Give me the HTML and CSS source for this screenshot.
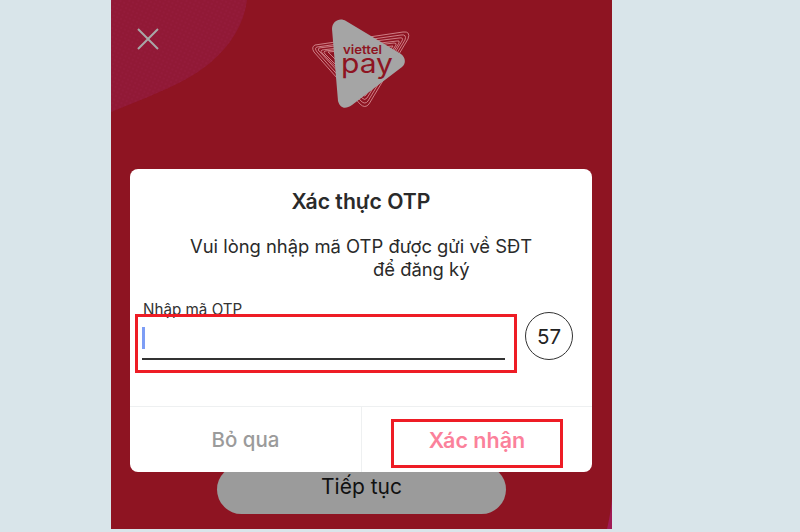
FILE: index.html
```html
<!DOCTYPE html>
<html lang="vi">
<head>
<meta charset="utf-8">
<title>Xác thực OTP</title>
<link rel="stylesheet" href="styles.css">
</head>
<body>
<main class="phone">
  <svg class="blob" viewBox="0 0 501 529" aria-hidden="true">
    <defs>
      <pattern id="dots" width="4" height="4" patternUnits="userSpaceOnUse" patternTransform="rotate(25)">
        <circle cx="1" cy="1" r="1" fill="#961b3c"/>
      </pattern>
    </defs>
    <path class="blob-main" d="M0 0H136C133 24 120 45 99 63C78 80 55 90 0 112Z"/>
    <path fill="url(#dots)" d="M0 0H136C133 24 120 45 99 63C78 80 55 90 0 112Z"/>
    <path class="blob-corner" d="M501 529H496C499 516 500 508 501 498Z"/>
  </svg>
  <header class="top">
    <svg class="close" viewBox="0 0 20 20" aria-label="Đóng"><path d="M0 0L20 20M20 0L0 20"/></svg>
    <svg class="logo" viewBox="0 0 100 100" aria-label="viettel pay">
      <g class="rings">
        <path d="M5 28Q1 30 4 35L50 87Q55 92 59 87L98 22Q101 14 93 15Z"/>
        <path d="M7 30Q4 31 7 35L51 84Q55 88 58 84L95 23Q97 17 91 18Z"/>
        <path d="M9 31Q7 33 10 35L52 81Q55 84 57 81L92 24Q94 20 89 21Z"/>
        <path d="M12 33Q10 34 12 36L53 78Q55 80 56 78L89 26Q90 23 87 24Z"/>
        <path d="M15 34Q13 35 15 37L53 75Q55 76 56 74L86 28Q87 26 84 26Z"/>
        <path d="M18 35L54 71L83 29Z"/>
      </g>
      <path class="play" d="M22 12C22 4 30 0 36 4L91 37C96 41 96 47 92 50L42 88C35 93 30 91 28 84Z"/>
      <text class="logo-small" x="33" y="37" textLength="39" lengthAdjust="spacingAndGlyphs">viettel</text>
      <text class="logo-big" x="31" y="56" textLength="52" lengthAdjust="spacingAndGlyphs">pay</text>
    </svg>
  </header>
  <div class="behind">
    <button class="continue" type="button">Tiếp tục</button>
  </div>
  <section class="dialog">
    <h1 class="title">Xác thực OTP</h1>
    <p class="message">Vui lòng nhập mã OTP được gửi về SĐT<br><span class="indent">để đăng ký</span></p>
    <div class="otp">
      <label class="otp-label">Nhập mã OTP</label>
      <div class="otp-row">
        <div class="otp-box">
          <div class="otp-field"><span class="caret"></span></div>
        </div>
        <div class="timer">57</div>
      </div>
    </div>
    <footer class="actions">
      <div class="action skip">Bỏ qua</div>
      <div class="action confirm"><span class="confirm-box">Xác nhận</span></div>
    </footer>
  </section>
</main>
</body>
</html>
```
FILE: styles.css
```css
* { box-sizing: border-box; }
html, body { margin: 0; height: 532px; overflow: hidden; }
body {
  background: #d9e5ea;
  font-family: Inter, "Liberation Sans", sans-serif;
  padding-left: 111px;
}
.phone {
  position: relative;
  width: 501px;
  height: 529px;
  background: #8e1422;
  overflow: hidden;
}
.blob { position: absolute; inset: 0; width: 501px; height: 529px; }
.blob-main { fill: #911936; }
.blob-corner { fill: #a01a55; }
.top { position: relative; height: 169px; }
.close {
  position: absolute;
  left: 27px;
  top: 29px;
  width: 20px;
  height: 20px;
  overflow: visible;
  fill: none;
  stroke: #a8a8a8;
  stroke-width: 2;
}
.logo { position: absolute; left: 199px; top: 17px; width: 100px; height: 100px; }
.rings path { fill: none; stroke: #d58a90; stroke-width: .9; }
.play { fill: #a5a5a5; }
.logo-small { font: 600 12px Inter, sans-serif; fill: #8e1422; }
.logo-big { font: 400 27px Inter, sans-serif; fill: #8e1422; }
.behind { position: absolute; left: 106px; top: 465px; }
.continue {
  display: block;
  width: 289px;
  height: 49px;
  border: 0;
  border-radius: 25px;
  background: #9b9b9b;
  color: #111;
  font: 400 21px Inter, sans-serif;
  padding: 0 0 7px;
}
.dialog {
  position: absolute;
  left: 19px;
  top: 169px;
  width: 462px;
  height: 303px;
  background: #fff;
  border-radius: 8px;
  color: #2a2a2a;
}
.title {
  margin: 0;
  padding-top: 20px;
  text-align: center;
  font-size: 21.2px;
  line-height: 25px;
  font-weight: 600;
}
.message {
  margin: 21px 0 0;
  padding-left: 60px;
  font-size: 18.4px;
  line-height: 23px;
  white-space: nowrap;
}
.indent { padding-left: 183px; }
.otp { margin-top: 20px; padding-left: 5px; position: relative; }
.otp-label {
  display: block;
  padding-left: 8px;
  font-size: 15.2px;
  line-height: 17px;
  height: 13px;
  color: #333;
}
.otp-row { display: flex; align-items: flex-start; gap: 8px; }
.otp-box {
  position: relative;
  width: 382px;
  height: 59px;
  border: 3px solid #ee1c25;
  padding: 0 9px 0 4px;
}
.otp-field { height: 43px; border-bottom: 2px solid #333; padding-top: 10px; }
.caret { display: block; width: 3px; height: 22px; background: #7d9df5; }
.timer {
  width: 48px;
  height: 48px;
  margin-top: -2px;
  border: 1.5px solid #333;
  border-radius: 50%;
  display: flex;
  align-items: center;
  justify-content: center;
  font-size: 20.5px;
  color: #222;
}
.actions {
  position: absolute;
  left: 0;
  right: 0;
  bottom: 0;
  height: 66px;
  display: flex;
  border-top: 1px solid #eef0f1;
}
.action {
  flex: 1;
  display: flex;
  align-items: center;
  justify-content: center;
  font-size: 20.5px;
  font-weight: 500;
}
.skip { flex: 0 0 232px; color: #9b9b9b; border-right: 1px solid #eef0f1; }
.confirm { color: #fb819b; font-size: 21.5px; font-weight: 600; padding: 12px 0 0; align-items: flex-start; }
.confirm-box {
  width: 172px;
  height: 49px;
  border: 3px solid #ee1c25;
  padding-bottom: 7px;
  display: flex;
  align-items: center;
  justify-content: center;
}
```
